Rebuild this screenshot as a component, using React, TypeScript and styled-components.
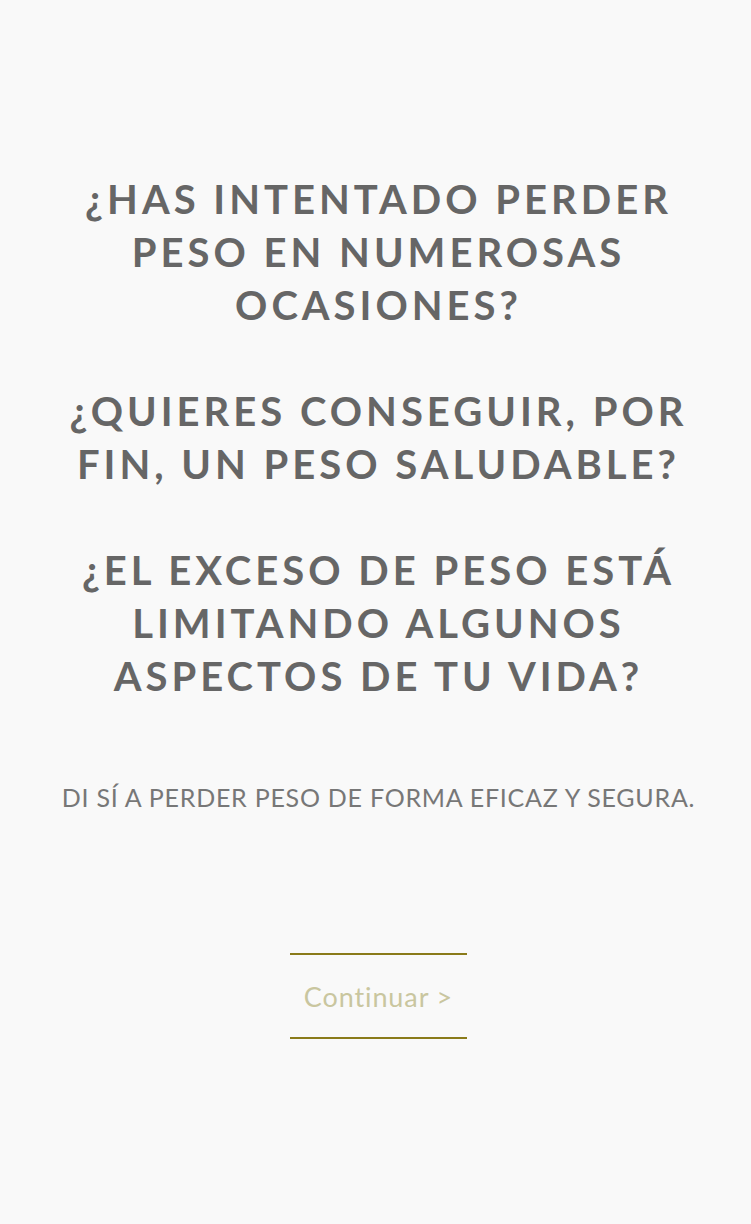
import React from "react";
import styled, { createGlobalStyle } from "styled-components";

const Global = createGlobalStyle`
  html, body { margin: 0; padding: 0; background: #f9f9f9; }
  body { font-family: Lato, "Open Sans", sans-serif; }
`;

const Page = styled.main`
  min-height: 1224px;
  display: flex;
  flex-direction: column;
  align-items: center;
  padding: 173px 0 0 6px;
  box-sizing: border-box;
`;

const Questions = styled.div`
  display: flex;
  flex-direction: column;
  gap: 53px;
  align-items: center;
`;

const Question = styled.h1`
  margin: 0;
  font-family: Lato, sans-serif;
  font-weight: 700;
  font-size: 40px;
  line-height: 53px;
  letter-spacing: 4px;
  color: #666666;
  text-align: center;
  text-transform: uppercase;
  white-space: nowrap;
`;

const Tagline = styled.p`
  margin: 79px 0 0;
  font-family: Lato, sans-serif;
  font-weight: 400;
  font-size: 25px;
  line-height: 30px;
  letter-spacing: 0.75px;
  color: #777777;
  text-align: center;
  white-space: nowrap;
`;

const ContinueButton = styled.button`
  margin-top: 141px;
  width: 177px;
  height: 86px;
  background: transparent;
  border: none;
  border-top: 2px solid #8a7b1a;
  border-bottom: 2px solid #8a7b1a;
  font-family: Lato, sans-serif;
  font-weight: 400;
  font-size: 27px;
  letter-spacing: 0.9px;
  color: #c9c69f;
  cursor: pointer;
  padding: 0;
`;

export default function App() {
  return (
    <>
      <Global />
      <Page>
        <Questions>
          <Question>
            ¿Has intentado perder
            <br />
            peso en numerosas
            <br />
            ocasiones?
          </Question>
          <Question>
            ¿Quieres conseguir, por
            <br />
            fin, un peso saludable?
          </Question>
          <Question>
            ¿El exceso de peso está
            <br />
            limitando algunos
            <br />
            aspectos de tu vida?
          </Question>
        </Questions>
        <Tagline>DI SÍ A PERDER PESO DE FORMA EFICAZ Y SEGURA.</Tagline>
        <ContinueButton>Continuar &gt;</ContinueButton>
      </Page>
    </>
  );
}
